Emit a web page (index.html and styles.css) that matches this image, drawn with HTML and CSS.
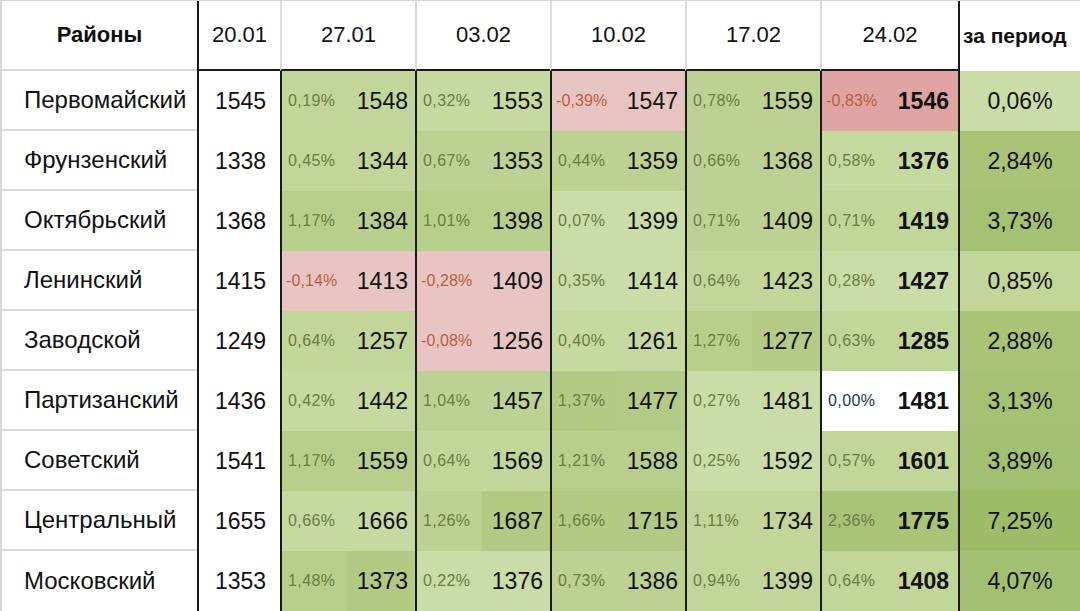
FILE: index.html
```html
<!DOCTYPE html>
<html lang="ru">
<head>
<meta charset="utf-8">
<title>Районы</title>
<link rel="stylesheet" href="styles.css">
</head>
<body>
<div class="sheet">
  <div class="h name-h">Районы</div>
  <div class="h first-h">20.01</div>
  <div class="h date-h">27.01</div>
  <div class="h date-h">03.02</div>
  <div class="h date-h">10.02</div>
  <div class="h date-h">17.02</div>
  <div class="h date-h">24.02</div>
  <div class="h period-h">за период</div>

  <div class="name">Первомайский</div><div class="first">1545</div>
  <div class="pct g2">0,19%</div><div class="val g2">1548</div>
  <div class="pct g1">0,32%</div><div class="val g1">1553</div>
  <div class="pct r1 neg">-0,39%</div><div class="val r1">1547</div>
  <div class="pct g3">0,78%</div><div class="val g3">1559</div>
  <div class="pct last r2 neg">-0,83%</div><div class="val bold r2">1546</div>
  <div class="period g0">0,06%</div>

  <div class="name">Фрунзенский</div><div class="first">1338</div>
  <div class="pct g2">0,45%</div><div class="val g2">1344</div>
  <div class="pct g3">0,67%</div><div class="val g3">1353</div>
  <div class="pct g3">0,44%</div><div class="val g3">1359</div>
  <div class="pct g3">0,66%</div><div class="val g3">1368</div>
  <div class="pct last g1">0,58%</div><div class="val bold g1">1376</div>
  <div class="period g6">2,84%</div>

  <div class="name">Октябрьский</div><div class="first">1368</div>
  <div class="pct g4">1,17%</div><div class="val g4">1384</div>
  <div class="pct g4">1,01%</div><div class="val g4">1398</div>
  <div class="pct g0">0,07%</div><div class="val g0">1399</div>
  <div class="pct g3">0,71%</div><div class="val g3">1409</div>
  <div class="pct last g2">0,71%</div><div class="val bold g2">1419</div>
  <div class="period g7">3,73%</div>

  <div class="name">Ленинский</div><div class="first">1415</div>
  <div class="pct r1 neg">-0,14%</div><div class="val r1">1413</div>
  <div class="pct r1 neg">-0,28%</div><div class="val r1">1409</div>
  <div class="pct g0">0,35%</div><div class="val g0">1414</div>
  <div class="pct g2">0,64%</div><div class="val g2">1423</div>
  <div class="pct last g0">0,28%</div><div class="val bold g0">1427</div>
  <div class="period g2">0,85%</div>

  <div class="name">Заводской</div><div class="first">1249</div>
  <div class="pct g2">0,64%</div><div class="val g2">1257</div>
  <div class="pct r1 neg">-0,08%</div><div class="val r1">1256</div>
  <div class="pct g1">0,40%</div><div class="val g1">1261</div>
  <div class="pct g4">1,27%</div><div class="val g5b">1277</div>
  <div class="pct last g2">0,63%</div><div class="val bold g2">1285</div>
  <div class="period g6">2,88%</div>

  <div class="name">Партизанский</div><div class="first">1436</div>
  <div class="pct g1">0,42%</div><div class="val g1">1442</div>
  <div class="pct g3">1,04%</div><div class="val g3">1457</div>
  <div class="pct g5">1,37%</div><div class="val g5b">1477</div>
  <div class="pct g0">0,27%</div><div class="val g0">1481</div>
  <div class="pct last w zero">0,00%</div><div class="val bold w">1481</div>
  <div class="period g7">3,13%</div>

  <div class="name">Советский</div><div class="first">1541</div>
  <div class="pct g4">1,17%</div><div class="val g4">1559</div>
  <div class="pct g2">0,64%</div><div class="val g2">1569</div>
  <div class="pct g4">1,21%</div><div class="val g4">1588</div>
  <div class="pct g0">0,25%</div><div class="val g0">1592</div>
  <div class="pct last g2">0,57%</div><div class="val bold g2">1601</div>
  <div class="period g8">3,89%</div>

  <div class="name">Центральный</div><div class="first">1655</div>
  <div class="pct g1">0,66%</div><div class="val g1">1666</div>
  <div class="pct g3">1,26%</div><div class="val g5">1687</div>
  <div class="pct g5">1,66%</div><div class="val g5">1715</div>
  <div class="pct g2">1,11%</div><div class="val g2">1734</div>
  <div class="pct last g6">2,36%</div><div class="val bold g6">1775</div>
  <div class="period g9">7,25%</div>

  <div class="name">Московский</div><div class="first">1353</div>
  <div class="pct g4">1,48%</div><div class="val g5">1373</div>
  <div class="pct g0">0,22%</div><div class="val g0">1376</div>
  <div class="pct g3">0,73%</div><div class="val g3">1386</div>
  <div class="pct g2">0,94%</div><div class="val g2">1399</div>
  <div class="pct last g2">0,64%</div><div class="val bold g2">1408</div>
  <div class="period g8">4,07%</div>
</div>
</body>
</html>
```
FILE: styles.css
```css
html, body {
  margin: 0;
  padding: 0;
  background: #ffffff;
}

.sheet {
  display: grid;
  grid-template-columns: 197px 83px repeat(4, 67px 68px) 68px 70px 122px;
  grid-template-rows: 70px repeat(9, 60px);
  width: 1080px;
  height: 611px;
  font-family: "Liberation Sans", Arial, sans-serif;
  color: #111;
  border-top: 1px solid #d6d6d6;
  box-sizing: border-box;
}

.sheet > div {
  display: flex;
  align-items: center;
  box-sizing: border-box;
  white-space: nowrap;
  overflow: hidden;
}

.h {
  justify-content: center;
  font-size: 22px;
  background: #fff;
  border-bottom: 2px solid #1a1a1a;
}

.name-h {
  font-weight: bold;
  font-size: 22px;
  border-left: 2px solid #d6d6d6;
  border-bottom: 2px solid #d6d6d6 !important;
}

.first-h {
  border-left: 2px solid #1a1a1a;
}

.date-h {
  grid-column: span 2;
  border-left: 2px solid #dadada;
}

.period-h {
  font-weight: bold;
  font-size: 21px;
  justify-content: flex-start;
  padding-left: 3px;
  border-left: 2px solid #1a1a1a;
  border-bottom: none;
}

.name {
  font-size: 24px;
  padding-left: 22px;
  border-left: 2px solid #d6d6d6;
  border-bottom: 2px solid #dadada;
}

.name:nth-last-child(-n+13) {
  border-bottom: none;
}

.first {
  justify-content: center;
  font-size: 23px;
  border-left: 2px solid #1a1a1a;
  padding-left: 2px;
}

.pct {
  font-size: 16px;
  letter-spacing: 0.4px;
  color: #6c7b42;
  padding-left: 6px;
  border-left: 2px solid #1a1a1a;
}

.pct.last {
  padding-left: 6px;
}

.pct.neg {
  color: #b8603e;
  padding-left: 4px;
  letter-spacing: 0.1px;
}

.pct.zero {
  color: #22305a;
}

.val {
  justify-content: flex-end;
  font-size: 23px;
  padding-right: 7px;
}

.val.bold {
  font-weight: bold;
  padding-right: 9px;
}

.period {
  justify-content: center;
  font-size: 23px;
  border-left: 2px solid #1a1a1a;
}

.w  { background: #ffffff; }
.g0 { background: #cadca8; }
.g1 { background: #c6d9a0; }
.g2 { background: #c2d699; }
.g3 { background: #bdd292; }
.g4 { background: #b8cf8b; }
.g5 { background: #b2ca83; }
.g5b { background: #b4ca87; }
.g6 { background: #a9c476; }
.g7 { background: #a5c274; }
.g8 { background: #a2c071; }
.g9 { background: #9dbd68; }
.r1 { background: #e8c5c3; }
.r2 { background: #dfa4a1; }
```
